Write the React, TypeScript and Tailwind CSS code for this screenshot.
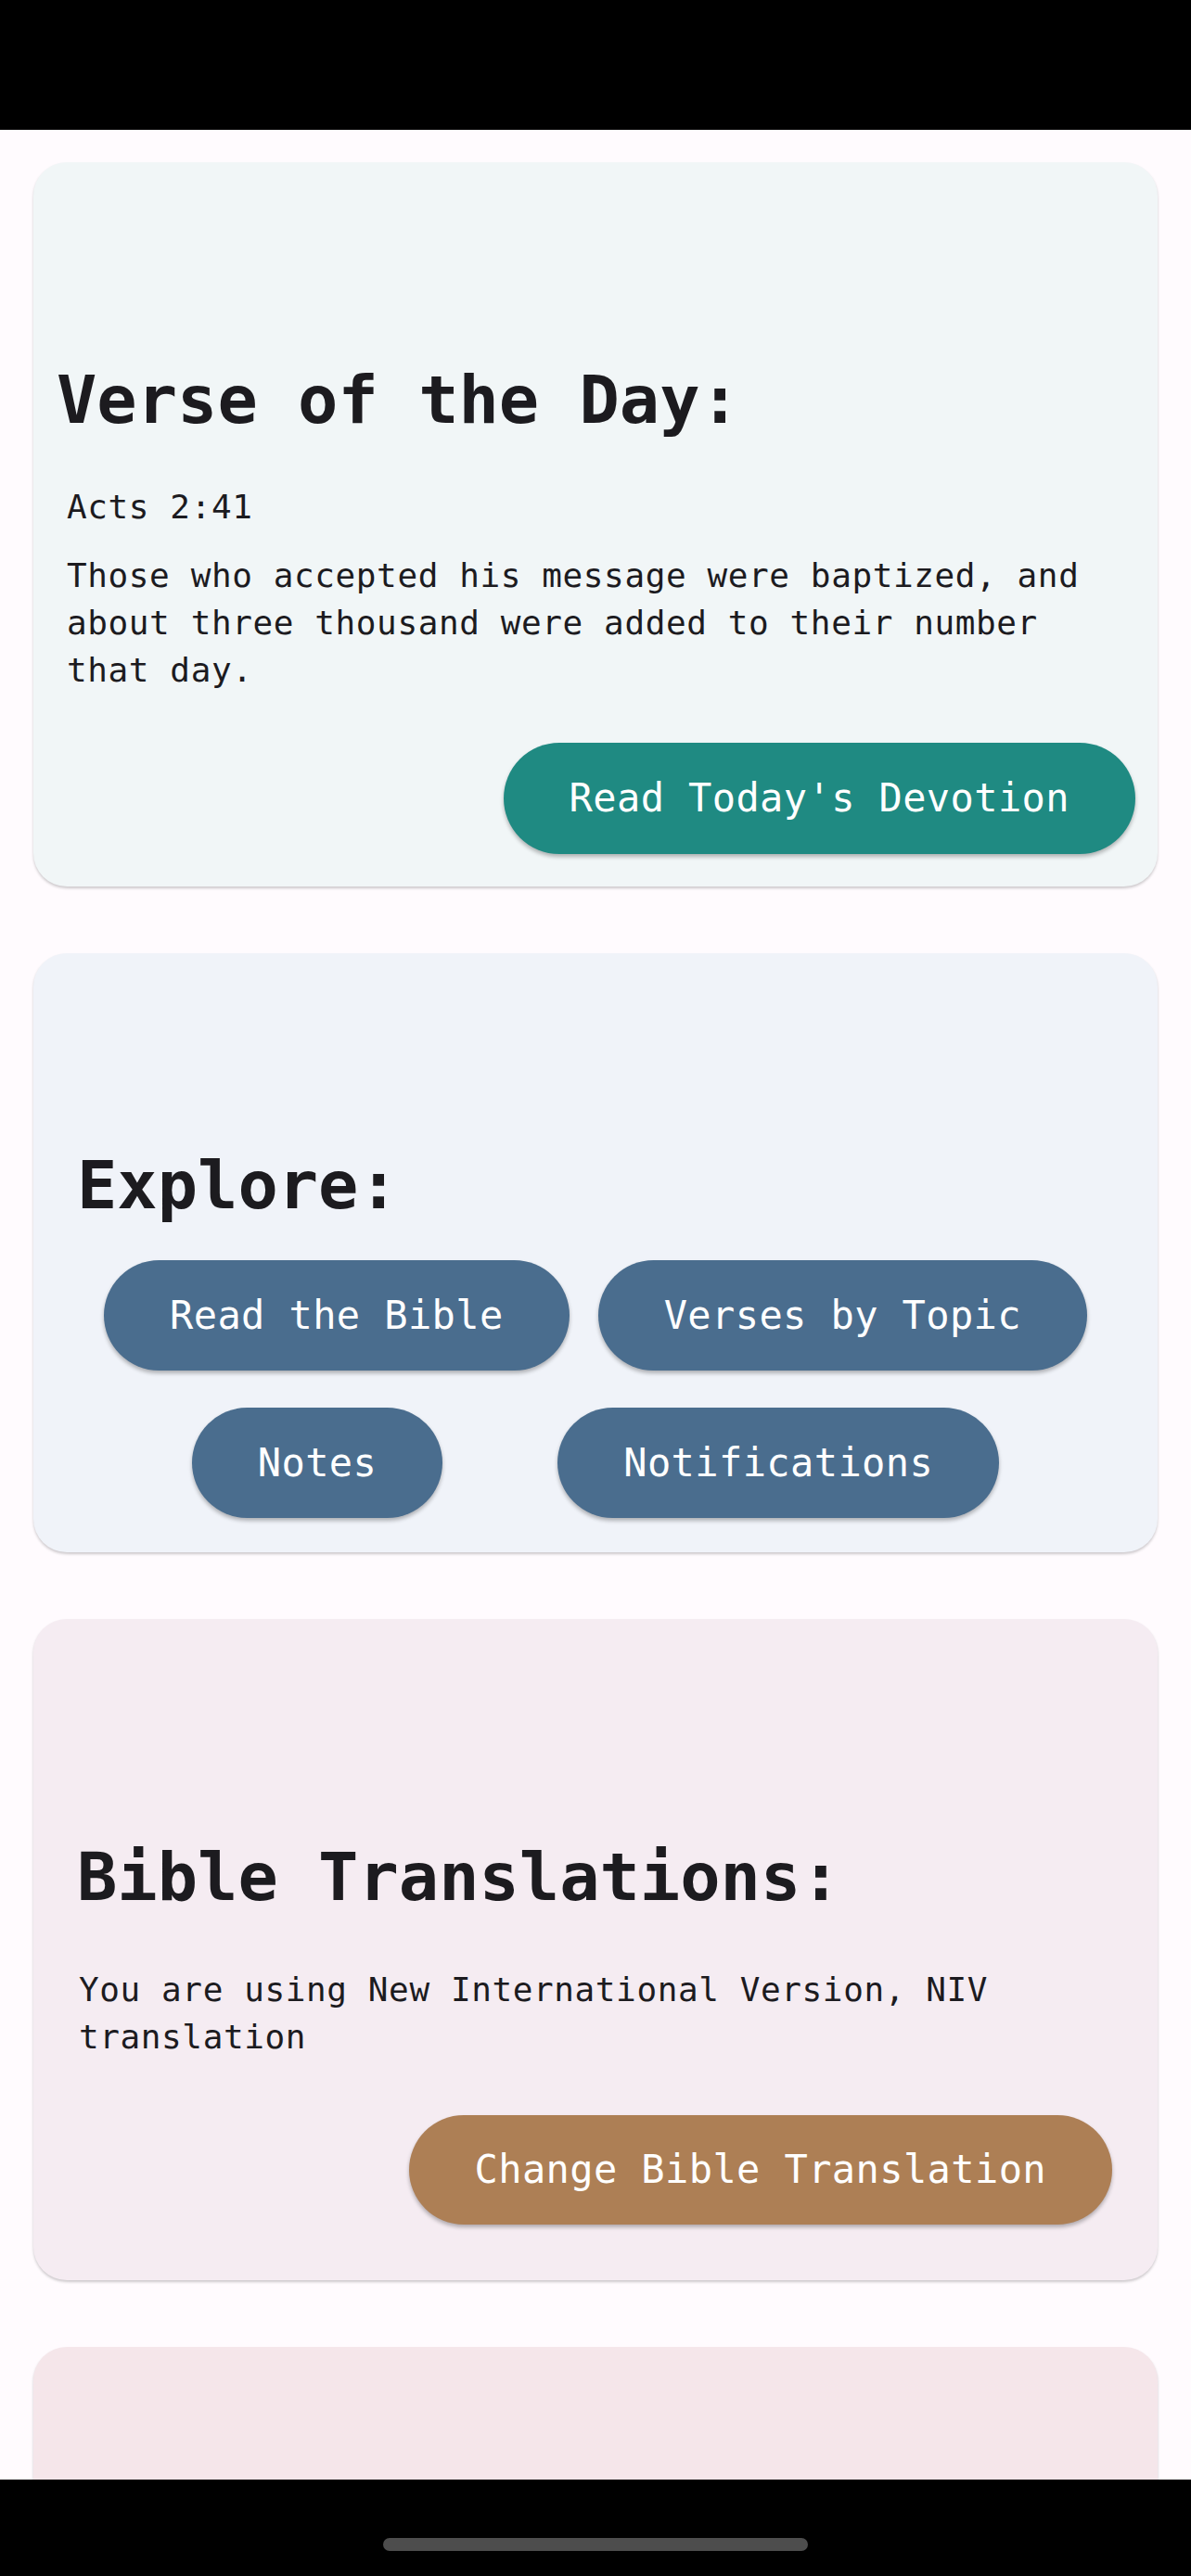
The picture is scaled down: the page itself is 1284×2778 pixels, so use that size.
import React from "react";

const mono = "font-['DejaVu_Sans_Mono',monospace]";

function PillButton({ label, bg, className = "" }: { label: string; bg: string; className?: string }) {
  return (
    <div
      className={`flex items-center justify-center rounded-full px-[71px] text-[42px] leading-[48px] tracking-[0.4px] text-white shadow-[0_3px_4px_rgba(0,0,0,0.28)] ${bg} ${className}`}
    >
      <span className="whitespace-pre">{label}</span>
    </div>
  );
}

export default function App() {
  return (
    <div className={`relative h-[2778px] w-[1284px] overflow-hidden bg-[#fffbfe] ${mono} text-[#1c1b1f]`}>
      <div className="h-[140px] w-full bg-black" />

      <div className="flex flex-col gap-[72px] px-[36px] pt-[35px]">
        {/* Card 1 */}
        <div className="flex flex-col rounded-[36px] bg-[#f1f6f7] pb-[35px] pt-[213px] shadow-[0_2px_3px_rgba(0,0,0,0.2)]">
          <h1 className="pl-[25px] text-[72px] font-bold leading-[86px]">Verse of the Day:</h1>
          <div className="mt-[47px] pl-[36px] text-[36px] leading-[51px] tracking-[0.6px]">Acts 2:41</div>
          <p className="mt-[23px] pl-[36px] pr-[20px] text-[36px] leading-[51px] tracking-[0.6px]">
            Those who accepted his message were baptized, and about three thousand were added to their number that day.
          </p>
          <div className="mt-[53px] flex justify-end pr-[24px]">
            <PillButton label="Read Today's Devotion" bg="bg-[#1f8a82]" className="h-[120px] px-[70px]" />
          </div>
        </div>

        {/* Card 2 */}
        <div className="flex flex-col rounded-[36px] bg-[#f0f3f9] pb-[37px] pt-[207px] shadow-[0_2px_3px_rgba(0,0,0,0.2)]">
          <h1 className="pl-[47px] text-[72px] font-bold leading-[86px]">Explore:</h1>
          <div className="mt-[38px] flex flex-col gap-[40px]">
            <div className="flex justify-center gap-[31px]">
              <PillButton label="Read the Bible" bg="bg-[#4a6d8e]" className="h-[119px]" />
              <PillButton label="Verses by Topic" bg="bg-[#4a6d8e]" className="h-[119px]" />
            </div>
            <div className="flex justify-center gap-[124px]">
              <PillButton label="Notes" bg="bg-[#4a6d8e]" className="h-[119px]" />
              <PillButton label="Notifications" bg="bg-[#4a6d8e]" className="h-[119px]" />
            </div>
          </div>
        </div>

        {/* Card 3 */}
        <div className="flex flex-col rounded-[36px] bg-[#f5ecf2] pb-[60px] pt-[235px] shadow-[0_2px_3px_rgba(0,0,0,0.2)]">
          <h1 className="pl-[47px] text-[72px] font-bold leading-[86px]">Bible Translations:</h1>
          <p className="mt-[53px] pl-[49px] pr-[40px] text-[36px] leading-[51px] tracking-[0.6px]">
            You are using New International Version, NIV translation
          </p>
          <div className="mt-[59px] flex justify-end pr-[49px]">
            <PillButton label="Change Bible Translation" bg="bg-[#ad7f55]" className="h-[118px]" />
          </div>
        </div>

        {/* Card 4 (partially visible) */}
        <div className="h-[400px] rounded-[36px] bg-[#f5e6ea] shadow-[0_2px_3px_rgba(0,0,0,0.2)]" />
      </div>

      {/* System navigation bar overlay */}
      <div className="absolute bottom-0 left-0 flex h-[104px] w-full items-start justify-center bg-black pt-[63px]">
        <div className="h-[14px] w-[458px] rounded-full bg-[#4d4d4d]" />
      </div>
    </div>
  );
}
